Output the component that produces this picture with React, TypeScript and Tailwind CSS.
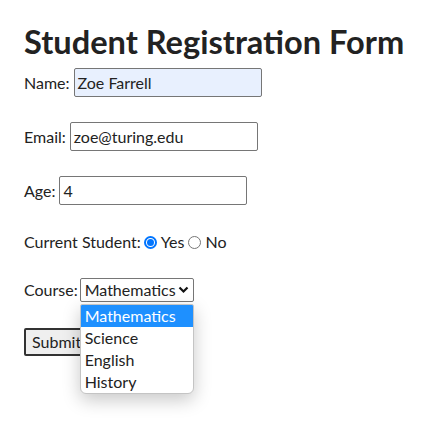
import { useState } from "react";

const courses = ["Mathematics", "Science", "English", "History"];

function Field({ label, value, autofill }: { label: string; value: string; autofill?: boolean }) {
  return (
    <div className="flex items-center h-[29px]">
      <span>{label}</span>
      <div
        className={
          "ml-[4px] w-[188px] h-[29px] border border-[#767676] rounded-[2px] px-[3px] flex items-center " +
          (autofill ? "bg-[#e8f0fe]" : "bg-white")
        }
      >
        {value}
      </div>
    </div>
  );
}

export default function App() {
  const [student] = useState(true);

  return (
    <div className="w-[434px] h-[432px] bg-white overflow-hidden text-[16px] text-[#222] font-['Lato',sans-serif] px-6">
      <h1 className="pt-[22px] text-[32.6px] leading-[40px] font-bold text-[#222] whitespace-nowrap">
        Student Registration Form
      </h1>

      <div className="mt-[6px] flex flex-col">
        <Field label="Name:" value="Zoe Farrell" autofill />
        <div className="h-[25px]" />
        <Field label="Email:" value="zoe@turing.edu" />
        <div className="h-[25px]" />
        <Field label="Age:" value="4" />

        <div className="mt-[26px] h-[22px] flex items-center">
          <span>Current Student:</span>
          <span className="ml-[3px] w-[13px] h-[13px] rounded-full border-2 border-[#0075ff] flex items-center justify-center">
            {student && <span className="w-[7px] h-[7px] rounded-full bg-[#0075ff]" />}
          </span>
          <span className="ml-[4px]">Yes</span>
          <span className="ml-[4px] w-[13px] h-[13px] rounded-full border border-[#767676]" />
          <span className="ml-[4px]">No</span>
        </div>

        <div className="mt-[25px] h-[24px] flex items-center">
          <span>Course:</span>
          <div className="relative ml-[2px]">
            <div className="w-[114px] h-[24px] border border-[#767676] rounded-[2px] pl-[4px] pr-[4px] flex items-center justify-between bg-white">
              <span>Mathematics</span>
              <svg width="11" height="8" viewBox="0 0 11 8">
                <path d="M1.5 1.5 L5.5 5.5 L9.5 1.5" fill="none" stroke="#111" strokeWidth="2.2" />
              </svg>
            </div>
            <div className="absolute left-0 top-[26px] z-10 w-[114px] bg-white border border-[#c4c4c4] rounded-b-[6px] rounded-t-[2px] overflow-hidden shadow-[0_6px_18px_rgba(0,0,0,0.22)]">
              {courses.map((c, i) => (
                <div
                  key={c}
                  className={
                    "h-[22px] leading-[22px] pl-[4px] " +
                    (i === 0 ? "bg-[#1e90ff] text-white" : "text-[#222]")
                  }
                >
                  {c}
                </div>
              ))}
            </div>
          </div>
        </div>

        <div className="mt-[26px]">
          <button className="h-[28px] px-[6px] border-2 border-[#333] bg-[#efefef] rounded-[2px] text-[#222]">
            Submit
          </button>
        </div>
      </div>
    </div>
  );
}
